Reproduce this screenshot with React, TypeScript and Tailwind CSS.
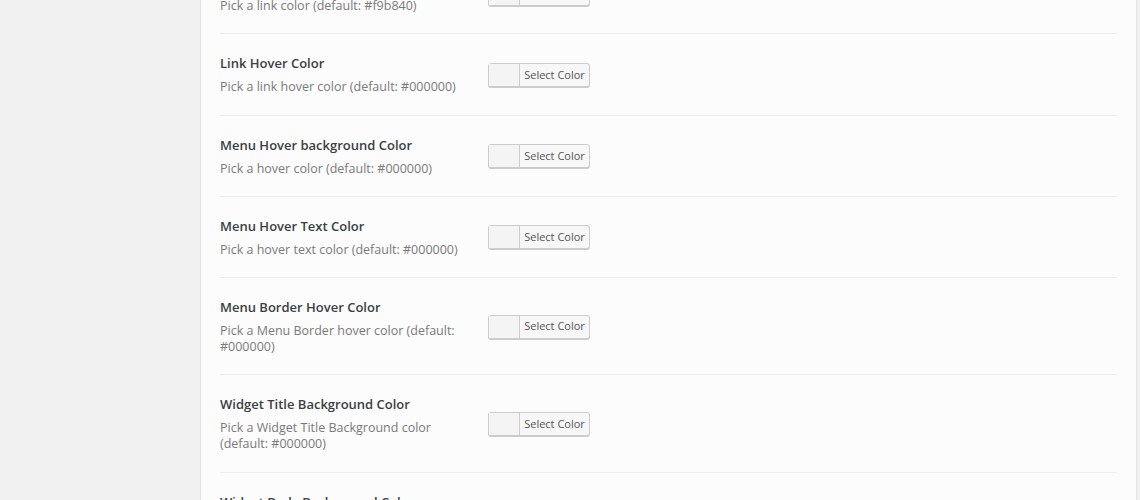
import React from "react";

const rows: { title: string; desc: string }[] = [
  { title: "Link Color", desc: "Pick a link color (default: #f9b840)" },
  { title: "Link Hover Color", desc: "Pick a link hover color (default: #000000)" },
  { title: "Menu Hover background Color", desc: "Pick a hover color (default: #000000)" },
  { title: "Menu Hover Text Color", desc: "Pick a hover text color (default: #000000)" },
  { title: "Menu Border Hover Color", desc: "Pick a Menu Border hover color (default: #000000)" },
  { title: "Widget Title Background Color", desc: "Pick a Widget Title Background color (default: #000000)" },
  { title: "Widget Body Background Color", desc: "Pick a Widget Body Background color (default: #ffffff)" },
];

function ColorButton() {
  return (
    <div className="flex h-[24px] w-[102px] items-stretch rounded-[3px] border border-[#cccccc] bg-[#f7f7f7] shadow-[0_1px_0_#cccccc]">
      <div className="w-[31px] border-r border-[#cccccc] bg-[#f4f4f4]" />
      <div className="flex flex-1 items-center justify-center text-[11px] text-[#555555]">Select Color</div>
    </div>
  );
}

export default function App() {
  return (
    <div
      className="flex h-[500px] w-[1140px] overflow-hidden bg-[#f1f1f1]"
      style={{ fontFamily: '"Open Sans", "Noto Sans", sans-serif' }}
    >
      <div className="w-[200px] shrink-0" />
      <div className="w-[937px] shrink-0 border-x border-[#e5e5e5] bg-[#fcfcfc] px-[19px]">
        <div className="mt-[-47px]">
          {rows.map((r, i) => (
            <div key={i} className="flex items-center border-b border-[#eeeeee] pt-[20px] pb-[19.3px]">
              <div className="w-[268px] shrink-0 pr-[20px]">
                <div className="text-[13px] font-semibold leading-[18px] text-[#3a3f44]">{r.title}</div>
                <div className="mt-[7px] text-[12.5px] leading-[16px] text-[#7a7a7a]">{r.desc}</div>
              </div>
              <ColorButton />
            </div>
          ))}
        </div>
      </div>
    </div>
  );
}
